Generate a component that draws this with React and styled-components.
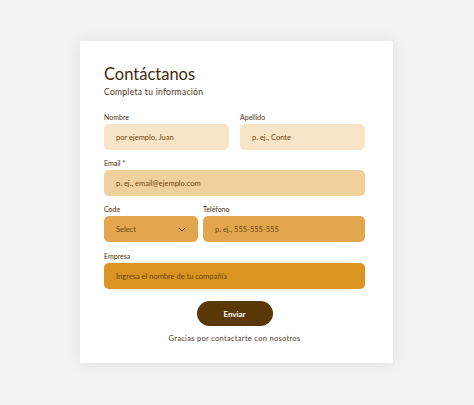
import React from 'react'
import styled, { createGlobalStyle } from 'styled-components'

const GlobalStyle = createGlobalStyle`
  html, body {
    margin: 0;
    padding: 0;
    background: #f2f2f2;
    font-family: 'Lato', 'Noto Sans', sans-serif;
  }
  * { box-sizing: border-box; }
`

const Page = styled.div`
  width: 474px;
  height: 405px;
  padding-top: 41px;
  padding-left: 80px;
`

const Card = styled.form`
  width: 313px;
  height: 322px;
  background: #fff;
  box-shadow: 0 0 14px rgba(0, 0, 0, 0.08);
  padding: 22px 28px 0 24px;
  display: flex;
  flex-direction: column;
`

const Title = styled.h1`
  margin: 0;
  font-weight: 400;
  font-size: 16.5px;
  line-height: 22px;
  color: #3f2a0c;
`

const Subtitle = styled.p`
  margin: 2px 0 0;
  font-size: 8.5px;
  letter-spacing: 0.3px;
  color: #4a3418;
`

const Row = styled.div`
  display: grid;
  grid-template-columns: ${p => p.cols || '1fr'};
  gap: ${p => p.gap || 11}px;
  margin-top: ${p => p.top || 0}px;
`

const Field = styled.label`
  display: flex;
  flex-direction: column;
`

const Label = styled.span`
  font-size: 7px;
  line-height: 10px;
  color: #4a3214;
  margin-bottom: 2px;
`

const Input = styled.div`
  height: 26px;
  border-radius: 5px;
  background: ${p => p.bg};
  display: flex;
  align-items: center;
  justify-content: space-between;
  padding: 0 12px;
  font-size: 7.5px;
  color: #6e4410;
`

const Chevron = () => (
  <svg width="8" height="5" viewBox="0 0 8 5" fill="none">
    <path d="M1 1l3 3 3-3" stroke="#5a3a0a" strokeWidth="1" strokeLinecap="round" strokeLinejoin="round" />
  </svg>
)

const Actions = styled.div`
  display: flex;
  flex-direction: column;
  align-items: center;
  margin-top: 12px;
`

const Button = styled.button`
  width: 76px;
  height: 25px;
  border: none;
  border-radius: 13px;
  background: #5a3806;
  color: #fff;
  font-family: inherit;
  font-size: 8px;
  font-weight: 700;
`

const Thanks = styled.p`
  margin: 8px 0 0;
  font-size: 7.5px;
  letter-spacing: 0.3px;
  color: #4a3a24;
`

export default function App() {
  return (
    <Page>
      <GlobalStyle />
      <Card onSubmit={e => e.preventDefault()}>
        <Title>Contáctanos</Title>
        <Subtitle>Completa tu información</Subtitle>

        <Row cols="1fr 1fr" top={15}>
          <Field>
            <Label>Nombre</Label>
            <Input bg="#f8e4c6">por ejemplo, Juan</Input>
          </Field>
          <Field>
            <Label>Apellido</Label>
            <Input bg="#f8e4c6">p. ej., Conte</Input>
          </Field>
        </Row>

        <Row top={8}>
          <Field>
            <Label>Email *</Label>
            <Input bg="#f0d09c">p. ej., email@ejemplo.com</Input>
          </Field>
        </Row>

        <Row cols="94px 1fr" gap={5} top={8}>
          <Field>
            <Label>Code</Label>
            <Input bg="#e2a64e">Select <Chevron /></Input>
          </Field>
          <Field>
            <Label>Teléfono</Label>
            <Input bg="#e2a64e">p. ej., 555-555-555</Input>
          </Field>
        </Row>

        <Row top={9}>
          <Field>
            <Label>Empresa</Label>
            <Input bg="#d99422">Ingresa el nombre de tu compañía</Input>
          </Field>
        </Row>

        <Actions>
          <Button type="submit">Enviar</Button>
          <Thanks>Gracias por contactarte con nosotros</Thanks>
        </Actions>
      </Card>
    </Page>
  )
}
